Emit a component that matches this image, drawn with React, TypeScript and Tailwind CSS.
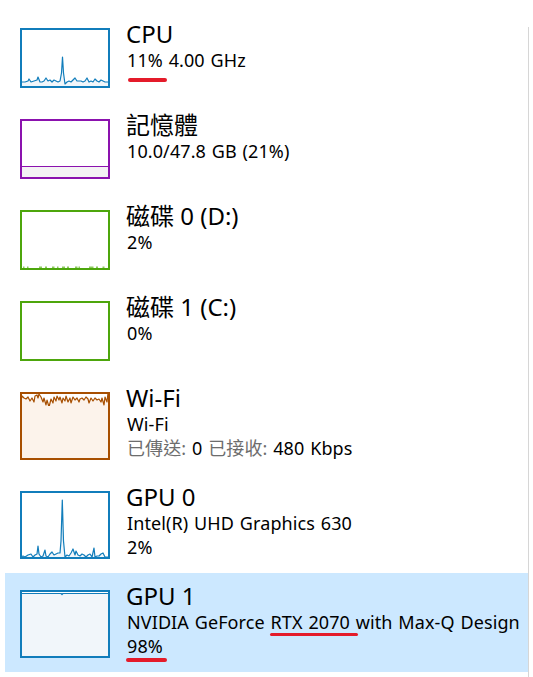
import type { ReactNode } from "react";

type Pt = [number, number];

const cpuLine: Pt[] = [
  [1, 54], [5, 54], [8, 53], [9, 51], [11, 54], [14, 53], [17, 52], [18, 49], [20, 54], [22, 54],
  [24, 53], [26, 50], [28, 53], [30, 52], [32, 54], [34, 52], [36, 53], [38, 54], [40, 53], [41.5, 45],
  [42.5, 29], [43.5, 45], [45, 56], [47, 54], [49, 53], [51, 54], [53, 52], [55, 50], [57, 53], [59, 53],
  [61, 53], [63, 54], [65, 53], [67, 50], [69, 54], [71, 53], [73, 54], [75, 51], [77, 53], [79, 54],
  [81, 52], [83, 53], [85, 54], [89, 54],
];

const wifiLine: Pt[] = [
  [1, 8], [2, 4], [4, 6], [6, 7], [8, 5], [10, 9], [12, 6], [14, 10], [15, 4], [17, 3], [18, 6], [19, 2],
  [21, 5], [23, 10], [24, 6], [26, 13], [27, 8], [29, 15], [31, 7], [33, 11], [34, 5], [36, 9], [37, 4],
  [39, 8], [40, 5], [42, 11], [43, 6], [45, 9], [46, 4], [48, 10], [50, 6], [51, 11], [53, 5], [55, 8],
  [57, 6], [59, 10], [60, 7], [62, 6], [64, 8], [66, 5], [68, 7], [69, 11], [71, 6], [73, 9], [75, 6],
  [77, 8], [79, 7], [81, 10], [82, 6], [84, 13], [85, 5], [87, 10], [88, 1], [89, 3],
];

const gpu0Line: Pt[] = [
  [1, 66], [3, 65], [5, 66], [8, 64], [11, 63], [13, 66], [15, 64], [17, 63], [18, 55], [19, 63], [21, 66],
  [23, 65], [25, 59], [26, 65], [28, 66], [30, 63], [32, 61], [34, 64], [36, 63], [38, 62], [40, 62],
  [41, 50], [42.3, 9], [43.5, 50], [45, 66], [47, 64], [49, 65], [51, 62], [53, 58], [55, 64], [56, 60],
  [58, 64], [60, 65], [62, 63], [64, 64], [66, 66], [68, 64], [70, 63], [72, 66], [74, 57], [75, 66],
  [77, 65], [79, 65], [81, 63], [83, 62], [85, 66], [89, 66],
];

const gpu1Line: Pt[] = [[1, 3.5], [41, 3.5], [42, 4.5], [43, 3.5], [89, 3.5]];

const diskDashes: [number, number][] = [
  [3, 4.5], [7, 8.5], [19, 22], [25, 27], [32, 34.5], [37, 38.5], [42, 45], [47, 49], [55, 57.5],
  [58.5, 60], [69, 73.5], [76, 78], [82.5, 84.5],
];

function Graph({
  h,
  color,
  fill,
  line,
  children,
}: {
  h: number;
  color: string;
  fill: string;
  line?: Pt[];
  children?: ReactNode;
}) {
  const pts = line ? line.map((p) => p.join(",")).join(" ") : "";
  return (
    <svg width="90" height={h} viewBox={`0 0 90 ${h}`} className="block shrink-0 mt-[9px]">
      <rect x="0" y="0" width="90" height={h} fill="#ffffff" />
      {line && <polygon points={`1,${h - 1} ${pts} 89,${h - 1}`} fill={fill} />}
      {line && <polyline points={pts} fill="none" stroke={color} strokeWidth="1.2" strokeLinejoin="round" />}
      {children}
      <rect x="1" y="1" width="88" height={h - 2} fill="none" stroke={color} strokeWidth="2" />
    </svg>
  );
}

// red hand-drawn underline laid over a word
function Mark({ children, cls }: { children: ReactNode; cls: string }) {
  return (
    <span className="relative">
      {children}
      <span className={`absolute rounded-full bg-[#e41b2a] ${cls}`} />
    </span>
  );
}

function Row({
  graph,
  title,
  selected,
  children,
}: {
  graph: ReactNode;
  title: string;
  selected?: boolean;
  children: ReactNode;
}) {
  return (
    <div className={`flex items-start pl-[15px] pt-[8px] pb-[14px] ${selected ? "bg-[#cce8ff]" : ""}`}>
      {graph}
      <div className="ml-[16px] flex flex-col text-black">
        <div className="text-[24px] leading-[30px]">{title}</div>
        <div className="text-[18px] leading-[23.5px] pl-[1px] tracking-[0.1px] [word-spacing:1px]">{children}</div>
      </div>
    </div>
  );
}

export default function App() {
  return (
    <div className="min-h-[677px] w-[533px] bg-white flex font-['Noto_Sans','Noto_Sans_CJK_TC',sans-serif] overflow-hidden">
      <div className="w-[528px] pl-[5px] pt-[11px] flex flex-col">
        <Row title="CPU" graph={<Graph h={60} color="#117dbb" fill="#f1f6fa" line={cpuLine} />}>
          <div>
            <Mark cls="left-[1px] right-[-4px] top-[30px] h-[4px]">11%</Mark> 4.00 GHz
          </div>
        </Row>
        <Row
          title="記憶體"
          graph={
            <Graph h={60} color="#8b12ae" fill="#f4f2f4">
              <rect x="1" y="47" width="88" height="12" fill="#f4f2f4" />
              <line x1="1" y1="47.5" x2="89" y2="47.5" stroke="#8b12ae" strokeWidth="1" />
            </Graph>
          }
        >
          <div>10.0/47.8 GB (21%)</div>
        </Row>
        <Row
          title="磁碟 0 (D:)"
          graph={
            <Graph h={60} color="#4da60c" fill="#eff7e9">
              {diskDashes.map(([a, b]) => (
                <rect key={a} x={a} y="56.5" width={b - a} height="1.5" fill="#8cc95e" />
              ))}
            </Graph>
          }
        >
          <div>2%</div>
        </Row>
        <Row title="磁碟 1 (C:)" graph={<Graph h={60} color="#4da60c" fill="#eff7e9" />}>
          <div>0%</div>
        </Row>
        <Row
          title="Wi-Fi"
          graph={
            <Graph h={68} color="#a74f01" fill="#fcf3eb" line={wifiLine}>
              <rect x="1" y="14" width="88" height="53" fill="#fcf3eb" />
            </Graph>
          }
        >
          <div>Wi-Fi</div>
          <div>
            <span className="text-[#6d6d6d]">已傳送:</span> 0 <span className="text-[#6d6d6d]">已接收:</span> 480 Kbps
          </div>
        </Row>
        <Row title="GPU 0" graph={<Graph h={68} color="#117dbb" fill="#f1f6fa" line={gpu0Line} />}>
          <div>Intel(R) UHD Graphics 630</div>
          <div>2%</div>
        </Row>
        <Row
          selected
          title="GPU 1"
          graph={<Graph h={68} color="#117dbb" fill="#f1f6fa" line={gpu1Line} />}
        >
          <div className="whitespace-nowrap">
            NVIDIA GeForce <Mark cls="left-[-1px] right-[-8px] top-[23px] h-[3px]">RTX 2070</Mark> with Max-Q Design
          </div>
          <div>
            <Mark cls="left-[-1px] right-[-4px] top-[24px] h-[4px]">98%</Mark>
          </div>
        </Row>
      </div>
      <div className="w-px bg-[#d6d6d6] mt-[27px] self-stretch" />
    </div>
  );
}
